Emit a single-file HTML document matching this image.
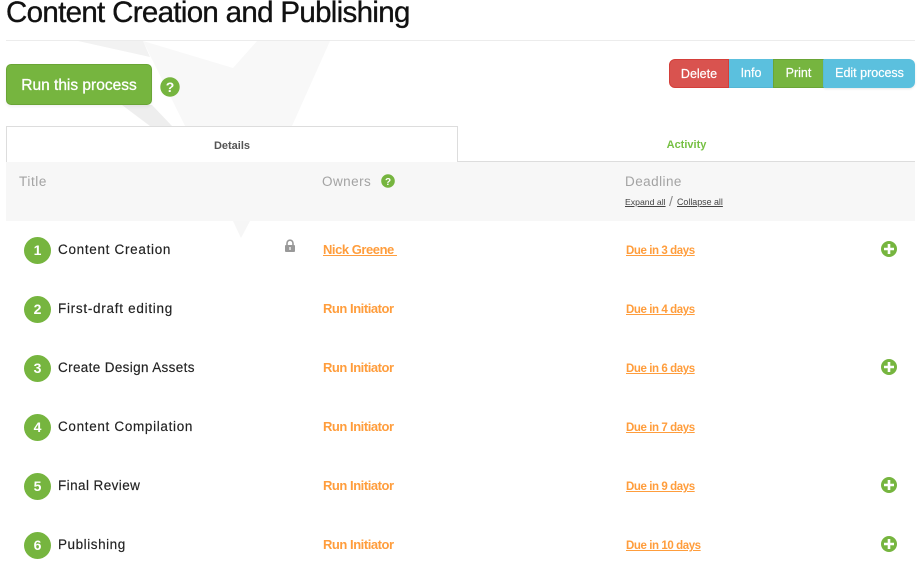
<!DOCTYPE html>
<html><head><meta charset="utf-8">
<style>
html,body{margin:0;padding:0;background:#fff}
body{width:924px;height:569px;position:relative;overflow:hidden;font-family:"Liberation Sans",sans-serif}
.a{position:absolute;white-space:nowrap}
.num{position:absolute;left:24px;width:27px;height:27px;border-radius:50%;background:#76b53f;color:#fff;font-weight:bold;font-size:14px;line-height:27px;text-align:center}
.t{position:absolute;left:58px;font-size:13.5px;line-height:16px;color:#222;white-space:nowrap;-webkit-text-stroke:.15px #222}
.o{position:absolute;left:323px;font-size:13px;font-weight:bold;line-height:16px;color:#ff9d3c;white-space:nowrap;letter-spacing:-.46px}
.d{position:absolute;left:626px;font-size:11.5px;font-weight:bold;line-height:16px;color:#ff9d3c;text-decoration:underline;white-space:nowrap;letter-spacing:-.42px}
.b{position:absolute;top:59px;height:29px;line-height:28px;color:#fff;font-size:12.5px;text-align:center;box-sizing:border-box;white-space:nowrap;-webkit-text-stroke:.2px #fff}
.h{position:absolute;top:174px;font-size:13.5px;line-height:16px;color:#a3a3a3;white-space:nowrap}
</style></head><body>
<svg class="a" style="left:0;top:0" width="924" height="569">
<polygon points="143,41 233,68 257,41 330,41 292,126 185,126" fill="#f8f8f8"/>
<polygon points="78,41 143,41 150,57" fill="#f2f2f2"/>
<polygon points="122,105 152,105 172,126 150,126" fill="#eeeeee"/>
<polygon points="233,221 250,221 241,238" fill="#f6f6f6"/>
</svg>
<div class="a" style="left:6px;top:-6px;font-size:29.5px;line-height:38px;color:#111;letter-spacing:-.68px;-webkit-text-stroke:.35px #111">Content Creation and Publishing</div>
<div class="a" style="left:6px;top:40px;width:909px;height:1px;background:#ececec"></div>

<div class="a" style="left:6px;top:64px;width:146px;height:41px;box-sizing:border-box;background:#76b53f;border:1px solid #6aa536;border-radius:5px;color:#fff;font-size:15.5px;line-height:41px;text-align:center;box-shadow:0 2px 3px rgba(0,0,0,.05);-webkit-text-stroke:.3px #fff">Run this process</div>
<svg class="a" style="left:160px;top:77px" width="20" height="20"><circle cx="10" cy="10" r="9.7" fill="#76b53f"/><text x="10" y="15" text-anchor="middle" font-family="Liberation Sans" font-weight="bold" font-size="14" fill="#fff">?</text></svg>

<div class="b" style="left:669px;width:60px;background:#d9534f;border:1px solid #d43f3a;border-radius:6px 0 0 6px">Delete</div>
<div class="b" style="left:729px;width:44px;background:#5bc0de;border-bottom:1px solid #54b6d4">Info</div>
<div class="b" style="left:773px;width:51px;background:#76b53f;border:1px solid #6aa536;border-right-color:#5bc0de;line-height:27px">Print</div>
<div class="b" style="left:824px;width:91px;background:#5bc0de;border-radius:0 6px 6px 0;box-shadow:0 1px 2px rgba(0,0,0,.1)">Edit process</div>

<div class="a" style="left:6px;top:126px;width:452px;height:36px;box-sizing:border-box;background:#fff;border:1px solid #ddd;border-bottom:0;text-align:center;font-size:11px;color:#555;line-height:38px"><b style="font-weight:bold;color:#555">Details</b></div>
<div class="a" style="left:458px;top:161px;width:457px;height:1px;background:#ddd"></div>
<div class="a" style="left:458px;top:126px;width:457px;height:35px;text-align:center;font-size:11px;font-weight:bold;color:#76c043;line-height:39px">Activity</div>

<div class="a" style="left:6px;top:162px;width:909px;height:59px;background:#f7f7f7"></div>
<div class="h" style="left:19px;letter-spacing:.6px">Title</div>
<div class="h" style="left:322px;letter-spacing:.45px">Owners</div>
<svg class="a" style="left:381px;top:174px" width="14" height="14"><circle cx="7" cy="7" r="6.8" fill="#76b53f"/><text x="7" y="11" text-anchor="middle" font-family="Liberation Sans" font-weight="bold" font-size="10" fill="#fff">?</text></svg>
<div class="h" style="left:625px;letter-spacing:.45px">Deadline</div>
<div class="a" style="left:625px;top:196px;font-size:8.7px;line-height:12px;color:#444;text-decoration:underline">Expand all</div>
<div class="a" style="left:669px;top:194px;font-size:14px;line-height:14px;color:#888">/</div>
<div class="a" style="left:677px;top:196px;font-size:8.9px;line-height:12px;color:#444;text-decoration:underline">Collapse all</div>

<div class="num" style="top:237px">1</div><div class="t" style="top:242px;letter-spacing:.69px">Content Creation</div>
<div class="num" style="top:296px">2</div><div class="t" style="top:301px;letter-spacing:.72px">First-draft editing</div>
<div class="num" style="top:355px">3</div><div class="t" style="top:360px;letter-spacing:.35px">Create Design Assets</div>
<div class="num" style="top:414px">4</div><div class="t" style="top:419px;letter-spacing:.67px">Content Compilation</div>
<div class="num" style="top:473px">5</div><div class="t" style="top:478px;letter-spacing:.42px">Final Review</div>
<div class="num" style="top:532px">6</div><div class="t" style="top:537px;letter-spacing:.55px">Publishing</div>

<svg class="a" style="left:284px;top:239px" width="12" height="14"><path d="M3 6V4.2a3 3 0 0 1 6 0V6" fill="none" stroke="#999" stroke-width="1.6"/><rect x="1" y="6" width="10" height="7" rx="1" fill="#999"/><rect x="5.2" y="8" width="1.6" height="3" fill="#e8e8e8"/></svg>

<div class="o" style="top:242px;text-decoration:underline">Nick Greene&nbsp;</div>
<div class="o" style="top:301px">Run Initiator</div>
<div class="o" style="top:360px">Run Initiator</div>
<div class="o" style="top:419px">Run Initiator</div>
<div class="o" style="top:478px">Run Initiator</div>
<div class="o" style="top:537px">Run Initiator</div>

<div class="d" style="top:243px">Due in 3 days</div>
<div class="d" style="top:302px">Due in 4 days</div>
<div class="d" style="top:361px">Due in 6 days</div>
<div class="d" style="top:420px">Due in 7 days</div>
<div class="d" style="top:479px">Due in 9 days</div>
<div class="d" style="top:538px">Due in 10 days</div>

<svg class="a" style="left:881px;top:241px" width="16" height="16"><circle cx="8" cy="8" r="8" fill="#76b53f"/><path d="M8 3V13M3 8H13" stroke="#fff" stroke-width="2.6"/></svg>
<svg class="a" style="left:881px;top:359px" width="16" height="16"><circle cx="8" cy="8" r="8" fill="#76b53f"/><path d="M8 3V13M3 8H13" stroke="#fff" stroke-width="2.6"/></svg>
<svg class="a" style="left:881px;top:477px" width="16" height="16"><circle cx="8" cy="8" r="8" fill="#76b53f"/><path d="M8 3V13M3 8H13" stroke="#fff" stroke-width="2.6"/></svg>
<svg class="a" style="left:881px;top:536px" width="16" height="16"><circle cx="8" cy="8" r="8" fill="#76b53f"/><path d="M8 3V13M3 8H13" stroke="#fff" stroke-width="2.6"/></svg>
</body></html>
